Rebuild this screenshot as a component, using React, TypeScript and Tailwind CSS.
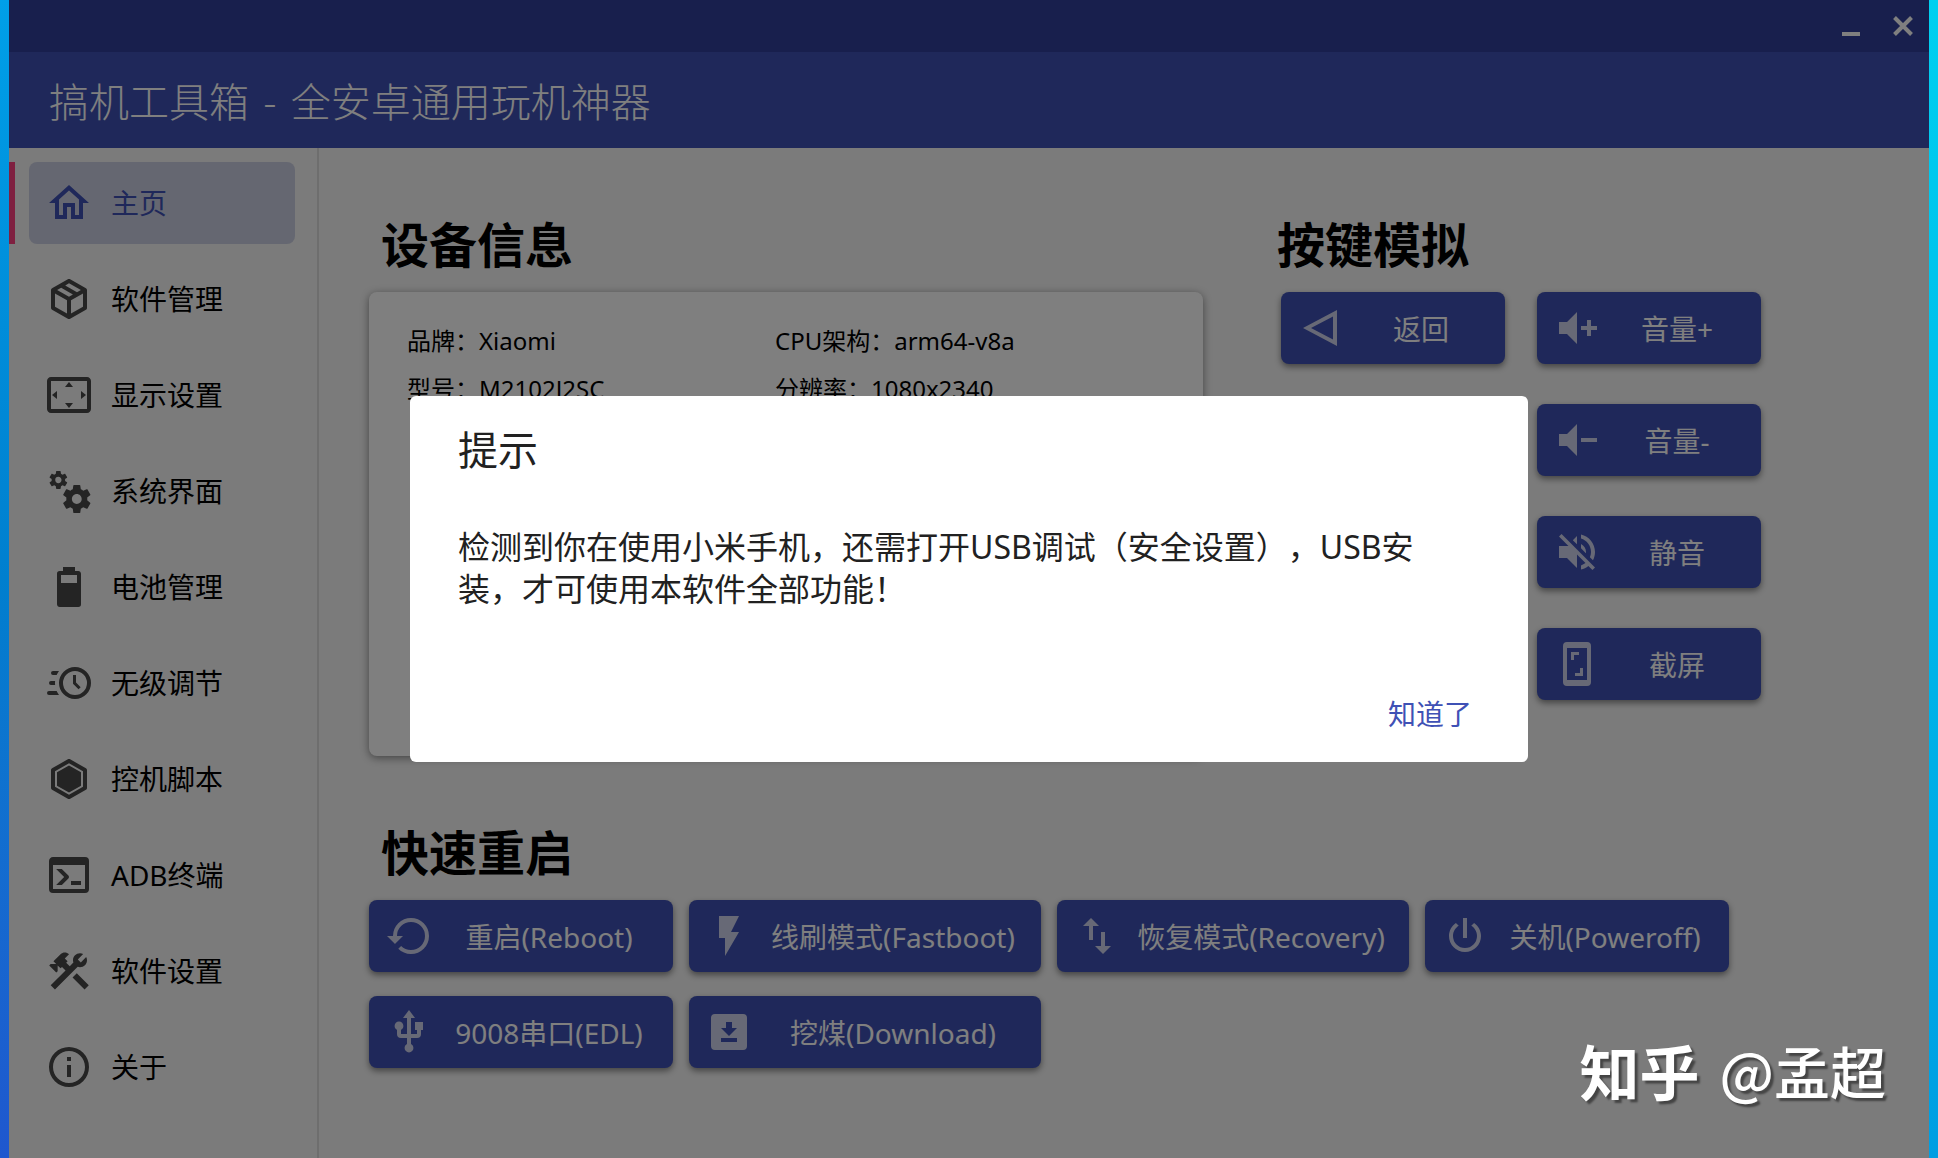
import * as React from "react";

const ICONS = {
  home: "M12 5.69L17 10.19V18H15V12H9V18H7V10.19L12 5.69M12 3L2 12H5V20H11V14H13V20H19V12H22L12 3Z",
  package:
    "M21,16.5C21,16.88 20.79,17.21 20.47,17.38L12.57,21.82C12.41,21.94 12.21,22 12,22C11.79,22 11.59,21.94 11.43,21.82L3.53,17.38C3.21,17.21 3,16.88 3,16.5V7.5C3,7.12 3.21,6.79 3.53,6.62L11.43,2.18C11.59,2.06 11.79,2 12,2C12.21,2 12.41,2.06 12.57,2.18L20.47,6.62C20.79,6.79 21,7.12 21,7.5V16.5M12,4.15L10.11,5.22L16,8.61L17.96,7.5L12,4.15M6.04,7.5L12,10.85L13.96,9.75L8.08,6.35L6.04,7.5M5,15.91L11,19.29V12.58L5,9.21V15.91M19,15.91V9.21L13,12.58V19.29L19,15.91Z",
  overscan:
    "M12,5.5L10,8H14L12,5.5M18,10V14L20.5,12L18,10M6,10L3.5,12L6,14V10M14,16H10L12,18.5L14,16M21,3H3C1.9,3 1,3.9 1,5V19C1,20.1 1.9,21 3,21H21C22.1,21 23,20.1 23,19V5C23,3.9 22.1,3 21,3M21,19H3V5H21V19Z",
  cogs: "M15.9,18.45C17.25,18.45 18.35,17.35 18.35,16C18.35,14.65 17.25,13.55 15.9,13.55C14.54,13.55 13.45,14.65 13.45,16C13.45,17.35 14.54,18.45 15.9,18.45M21.1,16.68L22.58,17.84C22.71,17.95 22.75,18.13 22.66,18.29L21.26,20.71C21.17,20.86 21,20.92 20.83,20.86L19.09,20.16C18.73,20.44 18.33,20.67 17.91,20.85L17.64,22.7C17.62,22.87 17.47,23 17.3,23H14.5C14.32,23 14.18,22.87 14.15,22.7L13.89,20.85C13.46,20.67 13.07,20.44 12.71,20.16L10.96,20.86C10.81,20.92 10.62,20.86 10.54,20.71L9.14,18.29C9.05,18.13 9.09,17.95 9.22,17.84L10.7,16.68L10.65,16L10.7,15.31L9.22,14.16C9.09,14.05 9.05,13.86 9.14,13.71L10.54,11.29C10.62,11.13 10.81,11.07 10.96,11.13L12.71,11.84C13.07,11.56 13.46,11.32 13.89,11.15L14.15,9.29C14.18,9.13 14.32,9 14.5,9H17.3C17.47,9 17.62,9.13 17.64,9.29L17.91,11.15C18.33,11.32 18.73,11.56 19.09,11.84L20.83,11.13C21,11.07 21.17,11.13 21.26,11.29L22.66,13.71C22.75,13.86 22.71,14.05 22.58,14.16L21.1,15.31L21.15,16L21.1,16.68M6.69,8.07C7.56,8.07 8.26,7.37 8.26,6.5C8.26,5.63 7.56,4.92 6.69,4.92A1.58,1.58 0 0,0 5.11,6.5C5.11,7.37 5.82,8.07 6.69,8.07M10.03,6.94L11,7.68C11.07,7.75 11.09,7.87 11.03,7.97L10.13,9.53C10.08,9.63 9.96,9.67 9.86,9.63L8.74,9.18L8,9.62L7.81,10.81C7.79,10.92 7.7,11 7.59,11H5.79C5.67,11 5.58,10.92 5.56,10.81L5.4,9.62L4.64,9.18L3.52,9.63C3.41,9.67 3.3,9.63 3.24,9.53L2.34,7.97C2.28,7.87 2.31,7.75 2.39,7.68L3.34,6.94L3.31,6.5L3.34,6.06L2.39,5.32C2.31,5.25 2.28,5.13 2.34,5.03L3.24,3.47C3.3,3.37 3.41,3.33 3.52,3.37L4.63,3.82L5.4,3.38L5.56,2.19C5.58,2.08 5.67,2 5.79,2H7.59C7.7,2 7.79,2.08 7.81,2.19L8,3.38L8.74,3.82L9.86,3.37C9.96,3.33 10.08,3.37 10.13,3.47L11.03,5.03C11.09,5.13 11.07,5.25 11,5.32L10.03,6.06L10.06,6.5L10.03,6.94Z",
  battery:
    "M16,10H8V6H16M16.67,4H15V2H9V4H7.33A1.33,1.33 0 0,0 6,5.33V20.67C6,21.4 6.6,22 7.33,22H16.67A1.33,1.33 0 0,0 18,20.67V5.33C18,4.6 17.4,4 16.67,4Z",
  clock:
    "M15,4A8,8 0 0,1 23,12A8,8 0 0,1 15,20A8,8 0 0,1 7,12A8,8 0 0,1 15,4M15,6A6,6 0 0,0 9,12A6,6 0 0,0 15,18A6,6 0 0,0 21,12A6,6 0 0,0 15,6M14,8H15.5V11.78L17.83,14.11L16.77,15.17L14,12.4V8M2,18A1,1 0 0,1 1,17A1,1 0 0,1 2,16H5.83C6.14,16.71 6.54,17.38 7,18H2M3,13A1,1 0 0,1 2,12A1,1 0 0,1 3,11H5.05L5,12L5.05,13H3M4,8A1,1 0 0,1 3,7A1,1 0 0,1 4,6H7C6.54,6.62 6.14,7.29 5.83,8H4Z",
  hexagon:
    "M21,16.5C21,16.88 20.79,17.21 20.47,17.38L12.57,21.82C12.41,21.94 12.21,22 12,22C11.79,22 11.59,21.94 11.43,21.82L3.53,17.38C3.21,17.21 3,16.88 3,16.5V7.5C3,7.12 3.21,6.79 3.53,6.62L11.43,2.18C11.59,2.06 11.79,2 12,2C12.21,2 12.41,2.06 12.57,2.18L20.47,6.62C20.79,6.79 21,7.12 21,7.5V16.5M12,4.15L5,8.09V15.91L12,19.85L19,15.91V8.09L12,4.15M12,5.3L18,8.68V15.32L12,18.7L6,15.32V8.68L12,5.3Z",
  console:
    "M20,19V7H4V19H20M20,3A2,2 0 0,1 22,5V19A2,2 0 0,1 20,21H4A2,2 0 0,1 2,19V5C2,3.89 2.9,3 4,3H20M13,17V15H18V17H13M9.58,13L5.57,9H8.4L11.7,12.3C12.09,12.69 12.09,13.33 11.7,13.72L8.42,17H5.59L9.58,13Z",
  tools:
    "M13.78 15.3L19.78 21.3L21.89 19.14L15.89 13.14L13.78 15.3M17.5 10.1C17.11 10.1 16.69 10.05 16.36 9.91L4.97 21.25L2.86 19.14L10.27 11.74L8.5 9.96L7.78 10.66L6.33 9.25V12.11L5.63 12.81L2.11 9.25L2.81 8.55H5.62L4.22 7.14L7.78 3.58C8.95 2.41 10.83 2.41 12 3.58L9.89 5.74L11.3 7.14L10.59 7.85L12.38 9.63L14.2 7.75C14.06 7.42 14 7 14 6.63C14 4.66 15.56 3.11 17.5 3.11C18.09 3.11 18.61 3.25 19.08 3.53L16.41 6.2L17.91 7.7L20.58 5.03C20.86 5.5 21 6 21 6.63C21 8.55 19.45 10.1 17.5 10.1Z",
  info: "M11,9H13V7H11M12,20C7.59,20 4,16.41 4,12C4,7.59 7.59,4 12,4C16.41,4 20,7.59 20,12C20,16.41 16.41,20 12,20M12,2A10,10 0 0,0 2,12A10,10 0 0,0 12,22A10,10 0 0,0 22,12A10,10 0 0,0 12,2M11,17H13V11H11V17Z",
  back: "M3,12L20,3V21L3,12M7,12L18,17.8V6.2L7,12Z",
  volumePlus: "M3,9H7L12,4V20L7,15H3V9M14,11H17V8H19V11H22V13H19V16H17V13H14V11Z",
  volumeMinus: "M3,9H7L12,4V20L7,15H3V9M14,11H22V13H14V11Z",
  mute: "M12,4L9.91,6.09L12,8.18M4.27,3L3,4.27L7.73,9H3V15H7L12,20V13.27L16.25,17.53C15.58,18.04 14.83,18.46 14,18.7V20.77C15.38,20.45 16.63,19.82 17.68,18.96L19.73,21L21,19.73L12,10.73M19,12C19,12.94 18.8,13.82 18.46,14.64L19.97,16.15C20.62,14.91 21,13.5 21,12C21,7.72 18,4.14 14,3.23V5.29C16.89,6.15 19,8.83 19,12M16.5,12C16.5,10.23 15.5,8.71 14,7.97V10.18L16.45,12.63C16.5,12.43 16.5,12.21 16.5,12Z",
  screenshot:
    "M17,1H7A2,2 0 0,0 5,3V21A2,2 0 0,0 7,23H17A2,2 0 0,0 19,21V3A2,2 0 0,0 17,1M17,20H7V4H17V20M9,6H13V7.5H10.5V10H9V6M15,18H11V16.5H13.5V14H15V18Z",
  restore:
    "M13,3A9,9 0 0,0 4,12H1L4.89,15.89L4.96,16.03L9,12H6A7,7 0 0,1 13,5A7,7 0 0,1 20,12A7,7 0 0,1 13,19C11.07,19 9.32,18.21 8.06,16.94L6.64,18.36C8.27,20 10.5,21 13,21A9,9 0 0,0 22,12A9,9 0 0,0 13,3Z",
  flash: "M7,2V13H10V22L17,10H13L17,2H7Z",
  swap: "M9,3L5,7H8V14H10V7H13M16,17V10H14V17H11L15,21L19,17H16Z",
  power:
    "M16.56,5.44L15.11,6.89C16.84,7.94 18,9.83 18,12A6,6 0 0,1 12,18A6,6 0 0,1 6,12C6,9.83 7.16,7.94 8.88,6.88L7.44,5.44C5.36,6.88 4,9.28 4,12A8,8 0 0,0 12,20A8,8 0 0,0 20,12C20,9.28 18.64,6.88 16.56,5.44M13,3H11V13H13",
  usb: "M15,7V11H16V13H13V5H15L12,1L9,5H11V13H8V10.93C8.7,10.56 9.2,9.85 9.2,9C9.2,7.78 8.21,6.8 7,6.8C5.78,6.8 4.8,7.78 4.8,9C4.8,9.85 5.3,10.56 6,10.93V13A2,2 0 0,0 8,15H11V18.05C10.29,18.41 9.8,19.15 9.8,20A2.2,2.2 0 0,0 12,22.2A2.2,2.2 0 0,0 14.2,20C14.2,19.15 13.71,18.41 13,18.05V15H16A2,2 0 0,0 18,13V11H19V7H15Z",
  download:
    "M5,3H19A2,2 0 0,1 21,5V19A2,2 0 0,1 19,21H5A2,2 0 0,1 3,19V5A2,2 0 0,1 5,3M8,17H16V15H8V17M16,10H13.5V7H10.5V10H8L12,14L16,10Z",
};

type IconName = keyof typeof ICONS;

const NAV_ITEMS: { icon: IconName; label: string }[] = [
  { icon: "home", label: "主页" },
  { icon: "package", label: "软件管理" },
  { icon: "overscan", label: "显示设置" },
  { icon: "cogs", label: "系统界面" },
  { icon: "battery", label: "电池管理" },
  { icon: "clock", label: "无级调节" },
  { icon: "hexagon", label: "控机脚本" },
  { icon: "console", label: "ADB终端" },
  { icon: "tools", label: "软件设置" },
  { icon: "info", label: "关于" },
];

const DEVICE_INFO = [
  { label: "品牌", value: "Xiaomi" },
  { label: "CPU架构", value: "arm64-v8a" },
  { label: "型号", value: "M2102J2SC" },
  { label: "分辨率", value: "1080x2340" },
];

const VOLUME_KEYS: { icon: IconName; label: string }[] = [
  { icon: "volumePlus", label: "音量+" },
  { icon: "volumeMinus", label: "音量-" },
  { icon: "mute", label: "静音" },
  { icon: "screenshot", label: "截屏" },
];

const Icon = ({ name, className = "" }: { name: IconName; className?: string }) => (
  <svg viewBox="0 0 24 24" fill="currentColor" fillRule="evenodd" aria-hidden="true" className={`size-12 shrink-0 ${className}`}>
    <path d={ICONS[name]} />
  </svg>
);

const ActionButton = ({ icon, label, width = "w-56" }: { icon: IconName; label: string; width?: string }) => (
  <button
    type="button"
    className={`flex h-18 items-center rounded-lg bg-[#3f51b5] pr-2 pl-4 text-[28px] leading-10 whitespace-nowrap text-white shadow-[0_3px_6px_rgba(0,0,0,0.45)] ${width}`}
  >
    <Icon name={icon} className="opacity-75" />
    <span className="flex-1 pt-0.5 text-center">{label}</span>
  </button>
);

const SectionTitle = ({ children }: { children: React.ReactNode }) => (
  <h2 className="mb-4 text-5xl leading-[62px] font-bold text-black">{children}</h2>
);

export default function App() {
  const [active, setActive] = React.useState("主页");
  const [dialogOpen, setDialogOpen] = React.useState(true);

  return (
    <div className="relative flex min-h-screen font-['Noto_Sans','Noto_Sans_CJK_SC',sans-serif] text-black">
      <div className="w-[9px] shrink-0 bg-linear-to-b from-[#009fe8] via-[#007fcf] to-[#1f57cf]" />

      <div className="relative flex min-w-0 flex-1 flex-col bg-[#f6f6f6]">
        <div className="flex h-13 items-center justify-end gap-8 bg-[#303f9a] pr-4 text-white">
          <button type="button" aria-label="最小化" className="flex h-5 w-5 items-end justify-center">
            <span className="h-1 w-[18px] bg-white" />
          </button>
          <button type="button" aria-label="关闭">
            <svg viewBox="0 0 20 20" fill="none" stroke="currentColor" strokeWidth="4" className="size-5">
              <path d="M1.5 1.5L18.5 18.5M18.5 1.5L1.5 18.5" />
            </svg>
          </button>
        </div>

        <header className="flex h-24 items-center bg-[#3f51b5] px-10 pt-1">
          <h1 className="text-[40px] leading-14 font-light text-white">
            搞机工具箱 <span className="mx-1">-</span> 全安卓通用玩机神器
          </h1>
        </header>

        <div className="flex flex-1">
          <nav className="flex w-[310px] shrink-0 flex-col gap-3.5 border-r-2 border-[#dcdcdc] pt-3.5">
            {NAV_ITEMS.map((item) => {
              const selected = item.label === active;
              return (
                <div key={item.label} className="flex">
                  <div className={`w-1.5 ${selected ? "bg-[#ff4081]" : ""}`} />
                  <button
                    type="button"
                    onClick={() => setActive(item.label)}
                    className={`mr-[22px] ml-3.5 flex h-[82px] flex-1 items-center gap-[18px] rounded-lg pl-4 text-[28px] leading-10 ${
                      selected ? "bg-[#cbcfe2] text-[#3f51b5]" : "text-black"
                    }`}
                  >
                    <Icon name={item.icon} className={selected ? "" : "text-[#484848]"} />
                    <span>{item.label}</span>
                  </button>
                </div>
              );
            })}
          </nav>

          <main className="flex min-w-0 flex-1 flex-col gap-[66px] px-[50px] pt-[66px]">
            <div className="flex gap-[74px]">
              <section className="max-w-[834px] flex-1">
                <div className="pl-3">
                  <SectionTitle>设备信息</SectionTitle>
                </div>
                <dl className="grid min-h-[464px] auto-rows-[48px] grid-cols-[368px_1fr] rounded-lg bg-white px-[38px] pt-[25px] text-2xl leading-12 shadow-[0_2px_8px_rgba(0,0,0,0.45)]">
                  {DEVICE_INFO.map((row) => (
                    <div key={row.label} className="flex">
                      <dt>{row.label}：</dt>
                      <dd>{row.value}</dd>
                    </div>
                  ))}
                </dl>
              </section>

              <section className="shrink-0">
                <SectionTitle>按键模拟</SectionTitle>
                <div className="flex items-start gap-8 pl-1">
                  <ActionButton icon="back" label="返回" />
                  <div className="flex flex-col gap-10">
                    {VOLUME_KEYS.map((key) => (
                      <ActionButton key={key.label} icon={key.icon} label={key.label} />
                    ))}
                  </div>
                </div>
              </section>
            </div>

            <section>
              <div className="pl-3">
                <SectionTitle>快速重启</SectionTitle>
              </div>
              <div className="flex flex-col gap-6">
                <div className="flex gap-4">
                  <ActionButton icon="restore" label="重启(Reboot)" width="w-76" />
                  <ActionButton icon="flash" label="线刷模式(Fastboot)" width="w-88" />
                  <ActionButton icon="swap" label="恢复模式(Recovery)" width="w-88" />
                  <ActionButton icon="power" label="关机(Poweroff)" width="w-76" />
                </div>
                <div className="flex gap-4">
                  <ActionButton icon="usb" label="9008串口(EDL)" width="w-76" />
                  <ActionButton icon="download" label="挖煤(Download)" width="w-88" />
                </div>
              </div>
            </section>
          </main>
        </div>

        {dialogOpen && (
          <div className="absolute inset-0 flex items-center justify-center bg-black/50">
            <div
              role="dialog"
              aria-modal="true"
              aria-labelledby="dialog-title"
              className="flex min-h-[366px] w-full max-w-[1118px] flex-col rounded-md bg-white px-12 pt-[26px] pb-6 text-[#212121]"
            >
              <h3 id="dialog-title" className="text-[40px] leading-14">
                提示
              </h3>
              <p className="mt-12 pr-4 text-[32px] leading-[42px] [text-spacing-trim:space-all]">
                检测到你在使用小米手机，还需打开USB调试（安全设置），USB安装，才可使用本软件全部功能！
              </p>
              <button
                type="button"
                onClick={() => setDialogOpen(false)}
                className="mt-auto self-end px-2 text-[28px] leading-12 text-[#3f51b5]"
              >
                知道了
              </button>
            </div>
          </div>
        )}
      </div>

      <div className="w-[9px] shrink-0 bg-linear-to-b from-[#00d0f0] to-[#009ee2]" />

      <div className="absolute right-[52px] bottom-12 flex items-center gap-5 font-['Noto_Sans_CJK_SC',sans-serif] leading-20 font-medium text-white [text-shadow:3px_3px_2px_rgba(0,0,0,0.45)]">
        <span className="text-[60px] font-bold">知乎</span>
        <span className="text-[56px]">@孟超</span>
      </div>
    </div>
  );
}
